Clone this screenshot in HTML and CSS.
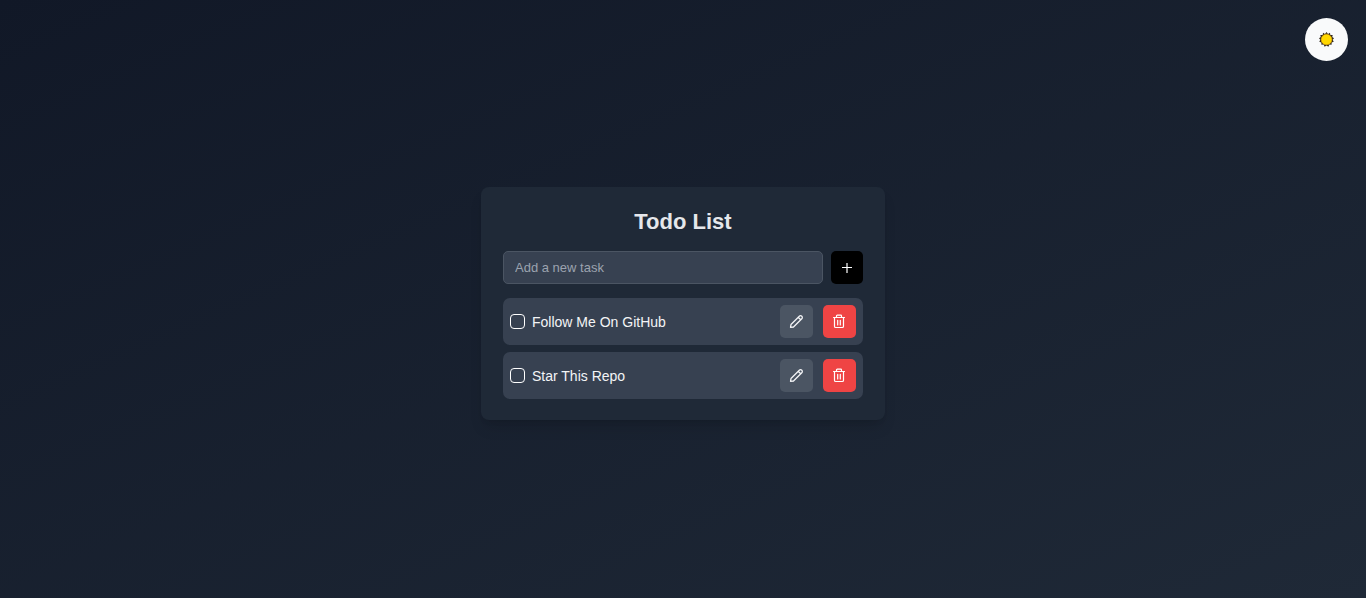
FILE: index.html
```html
<!DOCTYPE html>
<html lang="en">
<head>
<meta charset="utf-8">
<title>Todo List</title>
<link rel="stylesheet" href="styles.css">
</head>
<body>
<svg class="sprite" aria-hidden="true">
  <symbol id="edit" viewBox="0 0 15 15">
    <path d="M1.500 13.300 2 10.500 10.300 2.200a1.750 1.750 0 0 1 2.500 2.500L4.500 13zM9.200 3.300 11.700 5.800" fill="none" stroke="currentColor" stroke-width="1.300" stroke-linejoin="round" stroke-linecap="round"/>
  </symbol>
  <symbol id="trash" viewBox="0 0 15 15">
    <path d="M1.500 3.500h11M4.500 3.500V2a.8.8 0 0 1 .8-.8h3.400a.8.8 0 0 1 .8.800v1.500M2.500 3.500v8.700a1.300 1.300 0 0 0 1.300 1.300h6.400a1.300 1.300 0 0 0 1.300-1.300V3.500M5.700 6.300v4.700M8.300 6.300v4.700" fill="none" stroke="currentColor" stroke-width="1.200" stroke-linejoin="round" stroke-linecap="round"/>
  </symbol>
</svg>
<button class="theme" aria-label="Toggle theme">
  <svg viewBox="0 0 16 16" width="15" height="15" aria-hidden="true">
    <path d="M8 0 9.600 2 11.700.700 12.100 3.100 14.600 3.100 14.100 5.400 16 6.600 14.600 8.300 15.700 10.300 13.500 11.100 13.400 13.600 11.100 13.400 10 15.600 8 14.400 6 15.600 4.900 13.400 2.600 13.600 2.500 11.100.3 10.300 1.400 8.300 0 6.600 1.900 5.400 1.400 3.100 3.900 3.100 4.300.7 6.400 2z" fill="#30291f"/>
    <circle cx="8" cy="8" r="5.700" fill="#ffd800" stroke="#f0a800" stroke-width=".6"/>
  </svg>
</button>
<main class="page">
  <section class="card">
    <h1 class="title">Todo List</h1>
    <form class="add">
      <input class="field" type="text" placeholder="Add a new task" aria-label="New task">
      <button class="btn plus" type="button" aria-label="Add task">
        <svg viewBox="0 0 12 12" width="12" height="12" aria-hidden="true"><path d="M6 1v10M1 5.500h10" fill="none" stroke="currentColor" stroke-width="1.200"/></svg>
      </button>
    </form>
    <ul class="list">
      <li class="item">
        <input class="check" type="checkbox" id="t1"><label class="text" for="t1">Follow Me On GitHub</label>
        <button class="btn edit" aria-label="Edit"><svg class="icon"><use href="#edit"/></svg></button>
        <button class="btn delete" aria-label="Delete"><svg class="icon"><use href="#trash"/></svg></button>
      </li>
      <li class="item">
        <input class="check" type="checkbox" id="t2"><label class="text" for="t2">Star This Repo</label>
        <button class="btn edit" aria-label="Edit"><svg class="icon"><use href="#edit"/></svg></button>
        <button class="btn delete" aria-label="Delete"><svg class="icon"><use href="#trash"/></svg></button>
      </li>
    </ul>
  </section>
</main>
</body>
</html>
```
FILE: styles.css
```css
* { box-sizing: border-box; }
body {
  margin: 0;
  min-height: 100vh;
  font-family: "Liberation Sans", Arial, sans-serif;
  color: #f3f4f6;
  background: linear-gradient(to bottom right, #111827, #1f2937);
}
.sprite { display: none; }
button { border: 0; padding: 0; cursor: pointer; }
.page {
  min-height: 100vh;
  padding-top: 9px;
  display: flex;
  align-items: center;
  justify-content: center;
}
.card {
  width: 100%;
  max-width: 404px;
  padding: 22px 22px 21px;
  border-radius: 8px;
  background: #1f2937;
  box-shadow: 0 10px 15px -3px rgba(0, 0, 0, .12), 0 4px 6px -4px rgba(0, 0, 0, .12);
}
.title {
  margin: 0 0 16px;
  font-size: 22px;
  line-height: 26px;
  text-align: center;
  color: #e5e7eb;
}
.add {
  display: flex;
  gap: 8px;
  margin: 0 0 14px;
}
.field {
  flex: 1;
  min-width: 0;
  height: 33px;
  padding: 0 11px;
  border: 1px solid #4b5563;
  border-radius: 5px;
  background: #374151;
  color: #f3f4f6;
  font: 13px "Liberation Sans", Arial, sans-serif;
}
.field::placeholder { color: #9ca3af; }
.btn {
  display: grid;
  place-items: center;
  width: 33px;
  height: 33px;
  border-radius: 5px;
  color: #fff;
}
.plus { width: 32px; background: #000; }
.list {
  display: grid;
  gap: 7px;
  margin: 0;
  padding: 0;
  list-style: none;
}
.item {
  display: flex;
  align-items: center;
  padding: 7px;
  border-radius: 7px;
  background: #374151;
}
.check {
  appearance: none;
  width: 15px;
  height: 15px;
  margin: 0 7px 0 0;
  border: 1px solid #fff;
  border-radius: 4px;
}
.check:checked { background: #3b82f6; }
.text { flex: 1; font-size: 14px; line-height: 18px; }
.edit { background: #4b5563; color: #f3f4f6; }
.delete { margin-left: 10px; background: #ef4444; }
.icon { width: 15px; height: 15px; }
.theme {
  position: fixed;
  top: 18px;
  right: 18px;
  display: grid;
  place-items: center;
  width: 43px;
  height: 43px;
  border-radius: 50%;
  background: #f9fafb;
}
```
